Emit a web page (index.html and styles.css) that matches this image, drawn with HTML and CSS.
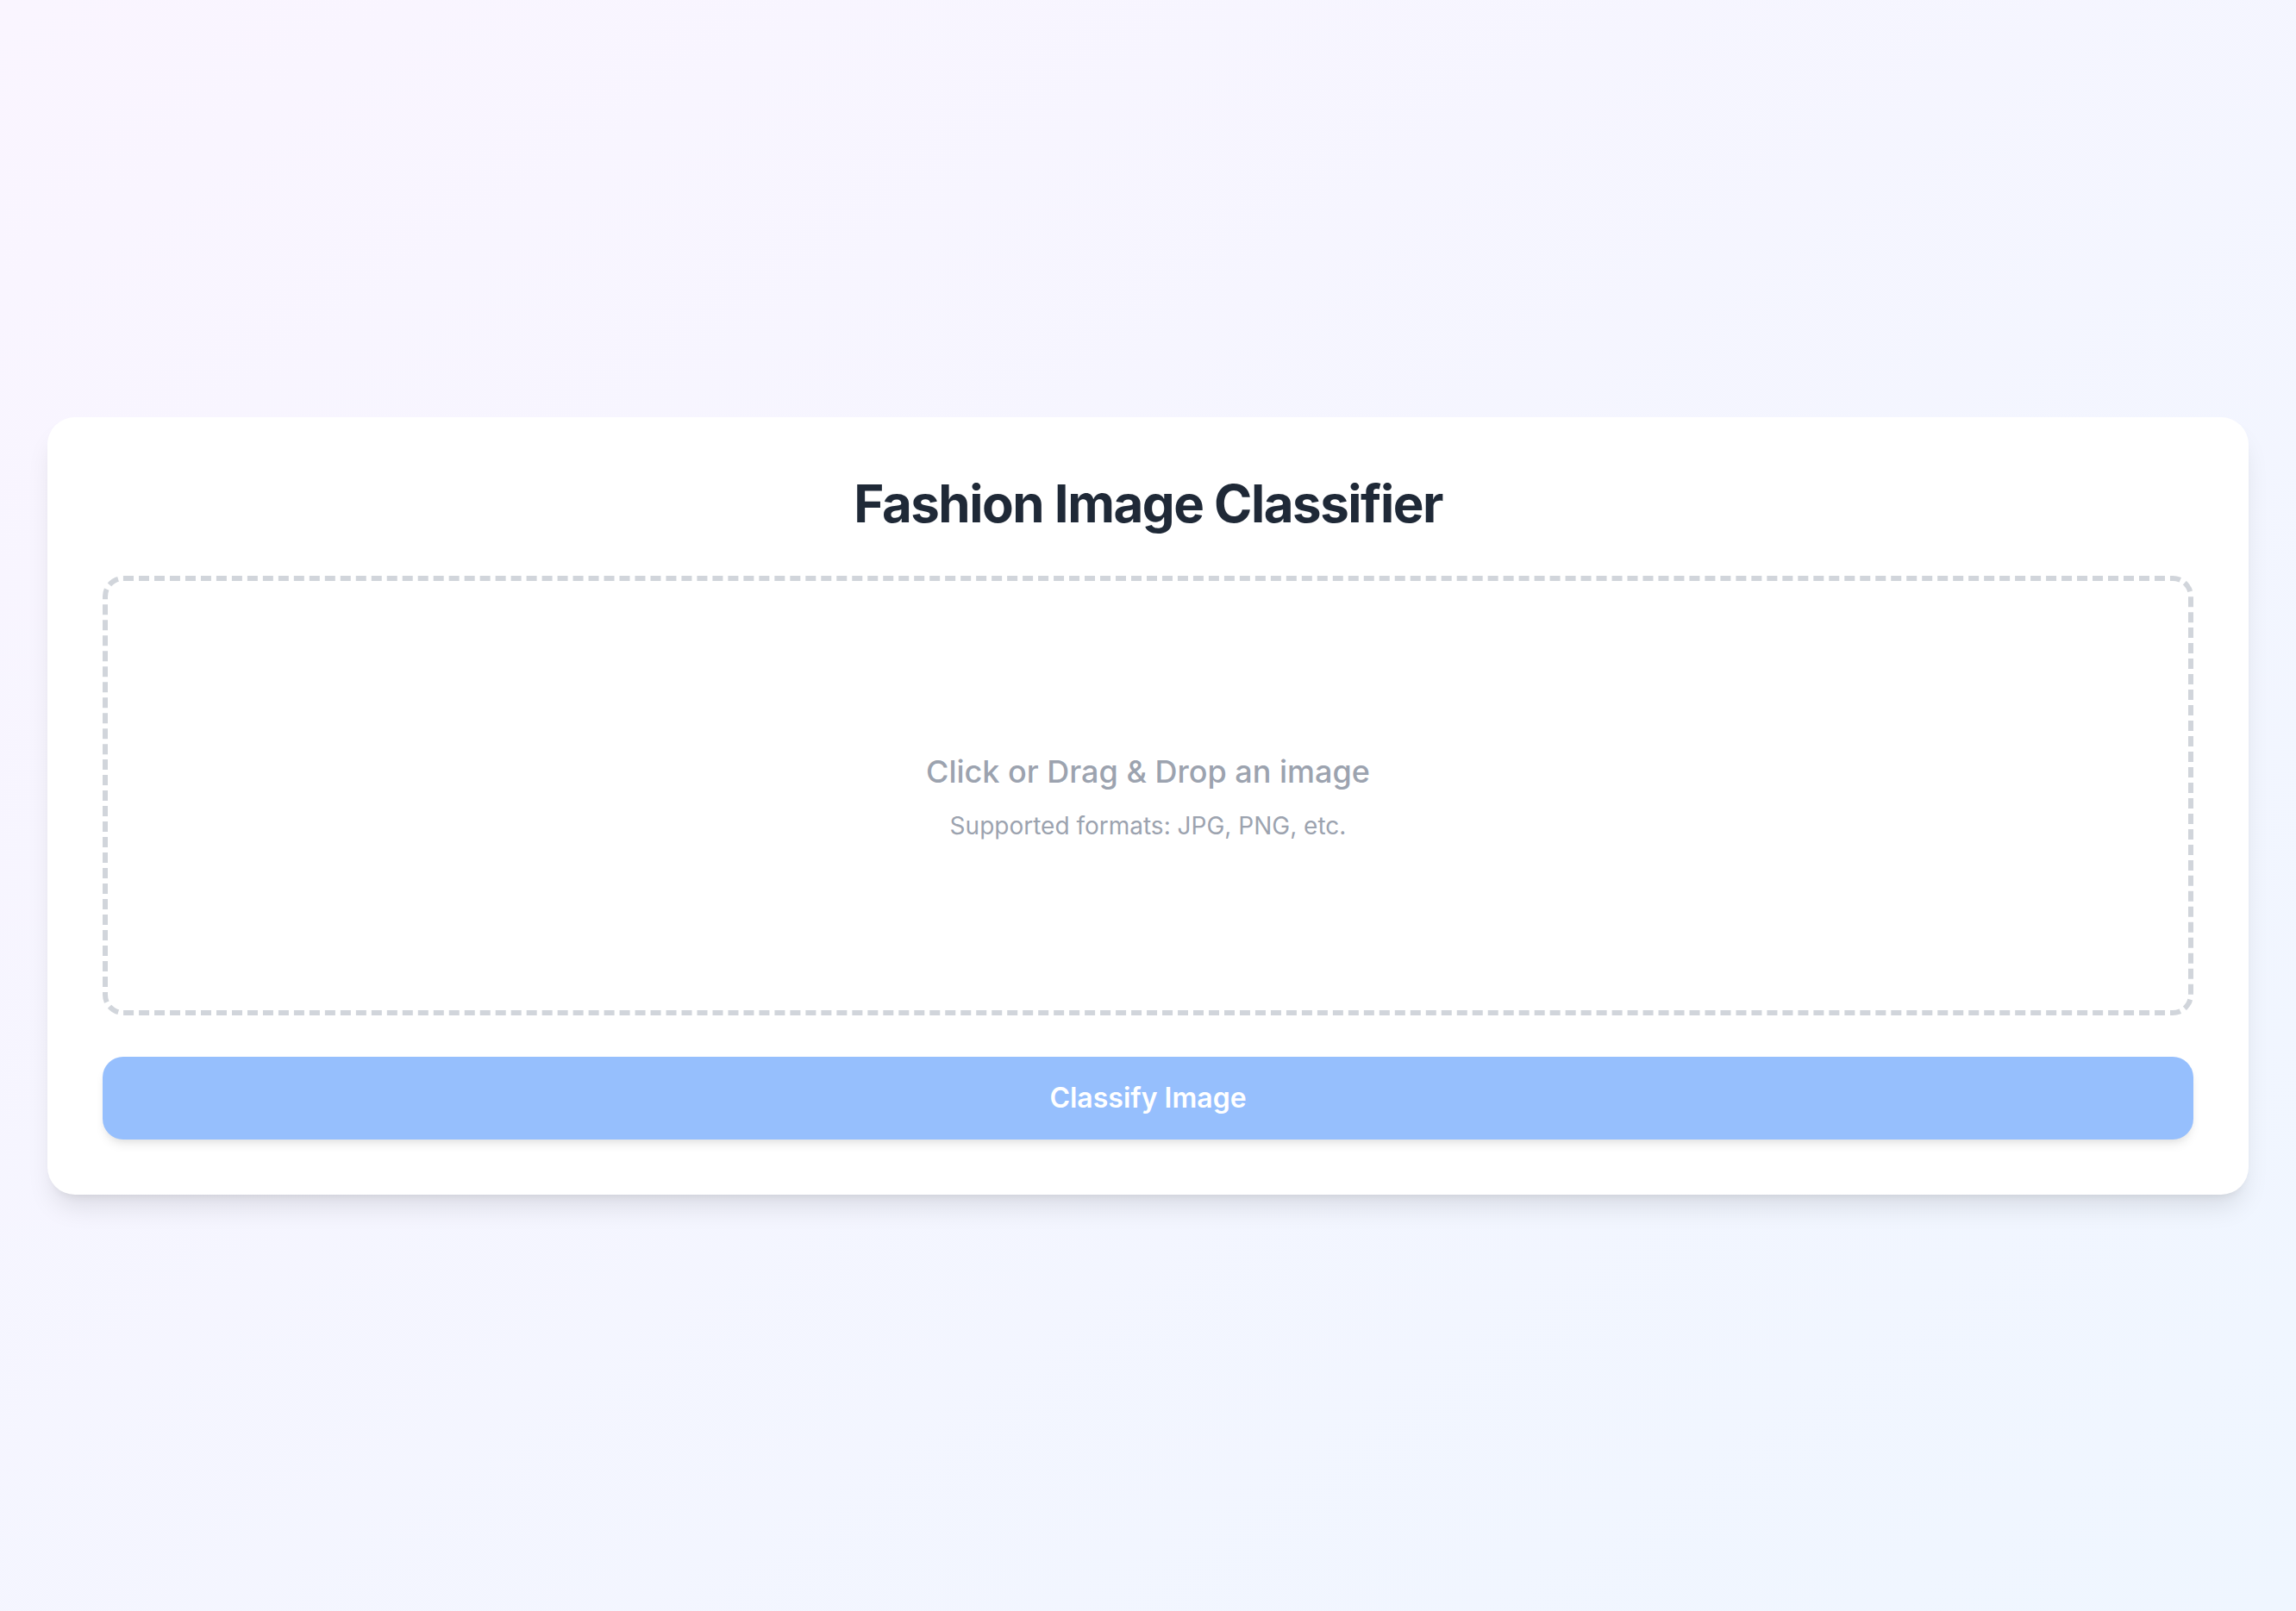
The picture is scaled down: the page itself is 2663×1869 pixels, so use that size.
FILE: index.html
```html
<!DOCTYPE html>
<html lang="en">
<head>
<meta charset="utf-8">
<title>Fashion Image Classifier</title>
<link rel="stylesheet" href="styles.css">
</head>
<body>
<main class="page">
  <section class="card">
    <h1 class="title">Fashion Image Classifier</h1>
    <label class="dropzone">
      <span class="drop-main">Click or Drag &amp; Drop an image</span>
      <span class="drop-sub">Supported formats: JPG, PNG, etc.</span>
    </label>
    <button class="classify" type="button">Classify Image</button>
  </section>
</main>
</body>
</html>
```
FILE: styles.css
```css
* { box-sizing: border-box; }
html, body { margin: 0; padding: 0; }
body {
  font-family: Inter, "Noto Sans", "Liberation Sans", sans-serif;
  background: linear-gradient(to bottom right, #faf5ff, #eff6ff);
  min-height: 100vh;
}
.page {
  min-height: 100vh;
  display: flex;
  align-items: center;
  justify-content: center;
  padding: 0 55px;
}
.card {
  width: 100%;
  background: #ffffff;
  border-radius: 32px;
  padding: 64px;
  box-shadow: 0 20px 30px -6px rgba(0,0,0,0.10), 0 8px 12px -8px rgba(0,0,0,0.10);
  display: flex;
  flex-direction: column;
}
.title {
  margin: 0 0 48px 0;
  text-align: center;
  font-size: 60px;
  line-height: 72px;
  font-weight: 700;
  letter-spacing: -0.025em;
  color: #1f2937;
}
.dropzone {
  height: 510px;
  border: 6px dashed #d1d5db;
  border-radius: 24px;
  display: flex;
  flex-direction: column;
  align-items: center;
  justify-content: center;
  gap: 15px;
  cursor: pointer;
}
.drop-main {
  font-size: 36px;
  line-height: 56px;
  font-weight: 500;
  color: #9ca3af;
}
.drop-sub {
  font-size: 28px;
  line-height: 40px;
  color: #9ca3af;
}
.classify {
  margin-top: 48px;
  height: 96px;
  width: 100%;
  border: none;
  border-radius: 24px;
  background: #96bffd;
  color: #ffffff;
  font-family: inherit;
  font-size: 32px;
  font-weight: 600;
  box-shadow: 0 8px 12px -2px rgba(0,0,0,0.08), 0 4px 8px -4px rgba(0,0,0,0.08);
}
```
